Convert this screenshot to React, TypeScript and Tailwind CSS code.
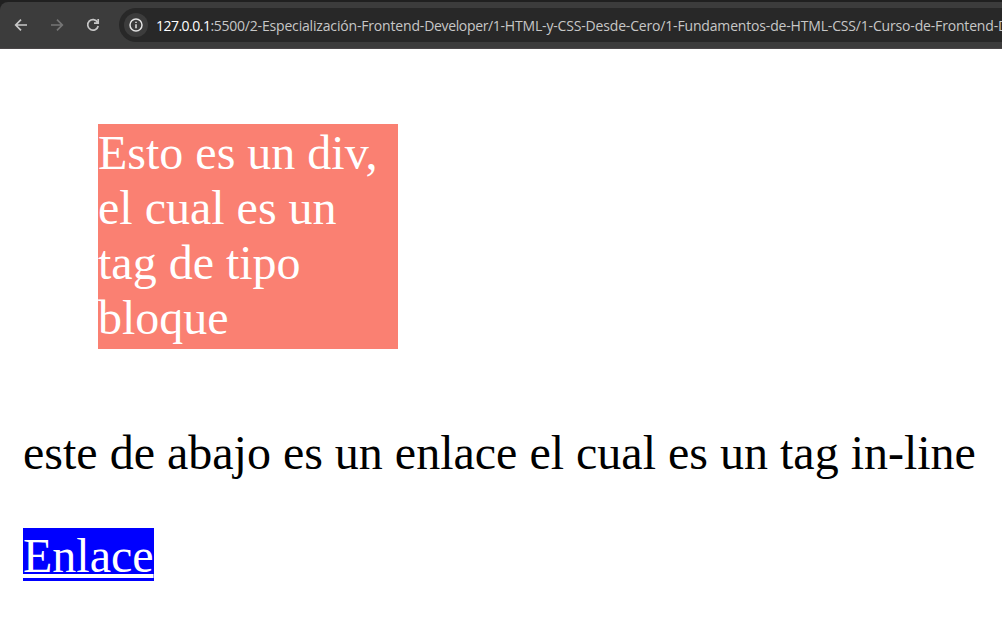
const ArrowLeft = ({ className }: { className: string }) => (
  <svg viewBox="0 0 14 14" className={className} fill="none" stroke="currentColor" strokeWidth="1.7">
    <path d="M13 7H2M7 1.7 1.7 7 7 12.3" />
  </svg>
);

export default function App() {
  return (
    <div className="h-[630px] w-[1002px] overflow-hidden bg-white">
      <header className="h-[49px] bg-[#202020] pt-0.5">
        <div className="flex h-[47px] items-center overflow-hidden rounded-tl-lg border-b border-[#4a4648] bg-[#3c3c3c] pl-[14px]">
          <ArrowLeft className="size-3.5 shrink-0 text-[#c7c7c7]" />
          <ArrowLeft className="ml-[22px] size-3.5 shrink-0 rotate-180 text-[#757575]" />
          <svg viewBox="0 0 14 14" className="ml-[22px] size-3.5 shrink-0 text-[#c7c7c7]" fill="none" stroke="currentColor" strokeWidth="1.7">
            <path d="M11.6 4.2A5.3 5.3 0 1 0 12.2 8" />
            <path d="M12.2 1V5.2H8" />
            <path d="M12.2 2.8V5.2H9.8Z" fill="currentColor" stroke="none" />
          </svg>
          <div className="ml-[19px] flex h-[34px] w-[883px] shrink-0 items-center overflow-hidden rounded-l-full bg-[#282828] pl-[5px]">
            <div className="flex size-6 shrink-0 items-center justify-center rounded-full bg-[#3c3c3c]">
              <svg viewBox="0 0 14 14" className="size-3.5 text-[#e3e3e3]" fill="none" stroke="currentColor" strokeWidth="1.5">
                <circle cx="7" cy="7" r="6" />
                <path d="M7 6.2V10.3M7 3.7V5.1" />
              </svg>
            </div>
            <span className="ml-2 whitespace-nowrap font-['Open_Sans',sans-serif] text-[14px] tracking-[-0.17px] text-[#c7c7c7]">
              <span className="tracking-[-0.52px] text-white">127.0.0.1</span>
              <span className="tracking-[-0.25px]">:5500/</span>2-Especialización-Frontend-<span className="tracking-[-0.35px]">Developer/1</span>-HTML-y-CSS-Desde-Cero/1-Fundamentos-de-HTML-CSS/1-Curso-de-Frontend-D
            </span>
          </div>
        </div>
      </header>
      <main className="px-[23px] pt-[75px] font-['Liberation_Serif',serif] text-[48px] leading-[55px] text-black">
        <div className="ml-[75px] h-[225px] w-[300px] bg-[salmon] pt-px text-white">Esto es un div, el cual es un tag de tipo bloque</div>
        <p className="mt-[76px] whitespace-nowrap">este de abajo es un enlace el cual es un tag in-line</p>
        <a href="#" className="mt-12 block h-[53px] w-fit bg-[blue] leading-[55px] text-white underline decoration-[4px] underline-offset-[2px] [text-decoration-skip-ink:none]">Enlace</a>
      </main>
    </div>
  );
}
